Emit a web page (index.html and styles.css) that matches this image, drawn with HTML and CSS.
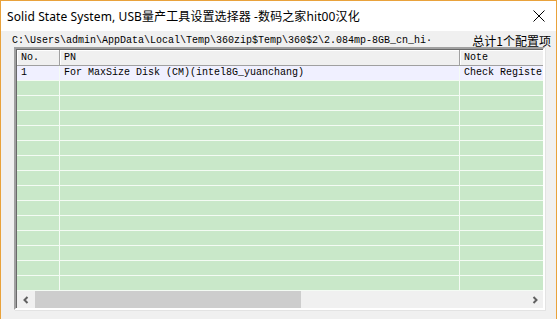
FILE: index.html
```html
<!DOCTYPE html>
<html lang="zh-CN">
<head>
  <meta charset="UTF-8" />
  <title>Solid State System, USB量产工具设置选择器</title>
  <link rel="stylesheet" href="styles.css">
</head>
<body>
  <div class="window">
    <div class="titlebar">
      <span class="title">Solid State System, USB量产工具设置选择器 -数码之家hit00汉化</span>
      <span class="close">
        <svg width="12" height="12" viewBox="0 0 12 12"><path d="M0.5 0.5 L11.5 11.5 M11.5 0.5 L0.5 11.5" stroke="#000" stroke-width="1" fill="none"/></svg>
      </span>
    </div>
    <div class="client">
      <div class="pathbar">
        <span class="path">C:\Users\admin\AppData\Local\Temp\360zip$Temp\360$2\2.084mp-8GB_cn_hi·</span>
        <span class="count">总计1个配置项</span>
      </div>
      <div class="listbox">
        <div class="grid">
          <div class="row head">
            <div class="cell c-no">No.</div>
            <div class="cell c-pn">PN</div>
            <div class="cell c-note">Note</div>
          </div>
          <div class="row selected">
            <div class="cell c-no">1</div>
            <div class="cell c-pn">For MaxSize Disk (CM)(intel8G_yuanchang)</div>
            <div class="cell c-note">Check Registe</div>
          </div>
          <div class="row"><div class="cell c-no"></div><div class="cell c-pn"></div><div class="cell c-note"></div></div>
          <div class="row"><div class="cell c-no"></div><div class="cell c-pn"></div><div class="cell c-note"></div></div>
          <div class="row"><div class="cell c-no"></div><div class="cell c-pn"></div><div class="cell c-note"></div></div>
          <div class="row"><div class="cell c-no"></div><div class="cell c-pn"></div><div class="cell c-note"></div></div>
          <div class="row"><div class="cell c-no"></div><div class="cell c-pn"></div><div class="cell c-note"></div></div>
          <div class="row"><div class="cell c-no"></div><div class="cell c-pn"></div><div class="cell c-note"></div></div>
          <div class="row"><div class="cell c-no"></div><div class="cell c-pn"></div><div class="cell c-note"></div></div>
          <div class="row"><div class="cell c-no"></div><div class="cell c-pn"></div><div class="cell c-note"></div></div>
          <div class="row"><div class="cell c-no"></div><div class="cell c-pn"></div><div class="cell c-note"></div></div>
          <div class="row"><div class="cell c-no"></div><div class="cell c-pn"></div><div class="cell c-note"></div></div>
          <div class="row"><div class="cell c-no"></div><div class="cell c-pn"></div><div class="cell c-note"></div></div>
          <div class="row"><div class="cell c-no"></div><div class="cell c-pn"></div><div class="cell c-note"></div></div>
          <div class="row"><div class="cell c-no"></div><div class="cell c-pn"></div><div class="cell c-note"></div></div>
          <div class="row"><div class="cell c-no"></div><div class="cell c-pn"></div><div class="cell c-note"></div></div>
        </div>
        <div class="hscroll">
          <span class="arrow">
            <svg width="8" height="8" viewBox="0 0 8 8"><path d="M5.5 1 L2.5 4 L5.5 7" stroke="#606060" stroke-width="2" fill="none"/></svg>
          </span>
          <span class="thumb"></span>
          <span class="track"></span>
          <span class="arrow">
            <svg width="8" height="8" viewBox="0 0 8 8"><path d="M2.5 1 L5.5 4 L2.5 7" stroke="#606060" stroke-width="2" fill="none"/></svg>
          </span>
        </div>
      </div>
    </div>
  </div>
</body>
</html>
```

FILE: styles.css
```css
* {
  margin: 0;
  padding: 0;
  box-sizing: border-box;
}

body {
  background: #fff;
  font-family: "Noto Sans", "Noto Sans CJK SC", sans-serif;
}

.window {
  width: 557px;
  height: 319px;
  border: 1px solid #e9a23b;
  border-bottom: none;
  display: flex;
  flex-direction: column;
}

.titlebar {
  height: 30px;
  background: #fff;
  display: flex;
  align-items: center;
  justify-content: space-between;
  padding: 0 11px 0 6px;
}

.title {
  font-size: 12px;
  color: #000;
  letter-spacing: 0.1px;
}

.close {
  display: flex;
  align-items: center;
}

.client {
  flex: 1;
  background: #f0f0f0;
  padding: 0 11px 0 13px;
  display: flex;
  flex-direction: column;
}

.pathbar {
  height: 16px;
  display: flex;
  align-items: center;
  justify-content: space-between;
}

.path {
  font-family: "Liberation Mono", monospace;
  font-size: 10px;
  color: #000;
  margin-left: -2px;
  margin-top: 2px;
}

.count {
  font-family: "Noto Sans CJK SC", sans-serif;
  font-size: 12px;
  color: #000;
  margin-right: -6px;
  margin-top: 2px;
}

.listbox {
  height: 263px;
  border: 2px solid;
  border-color: #a0a0a0 #fff #fff #a0a0a0;
  box-shadow: inset 1px 1px 0 #696969, 1px 1px 0 #e3e3e3;
  background: #fff;
  display: flex;
  flex-direction: column;
  padding: 1px 0 0 1px;
}

.grid {
  flex: 1;
  overflow: hidden;
  background: #c9e8c9;
}

.row {
  display: flex;
  height: 15px;
  border-bottom: 1px solid #f4fbf4;
}

.cell {
  font-family: "Liberation Mono", monospace;
  font-size: 10px;
  line-height: 14px;
  padding-left: 4px;
  white-space: nowrap;
  overflow: hidden;
  border-right: 1px solid #f4fbf4;
}

.c-no {
  width: 43px;
}

.c-pn {
  width: 400px;
}

.c-note {
  flex: 1;
  border-right: none;
}

.row.head {
  height: 16px;
  background: #f0f0f0;
  border-bottom: 1px solid #a0a0a0;
}

.row.head .cell {
  line-height: 15px;
  border-right: 1px solid #a0a0a0;
  box-shadow: inset 1px 1px 0 #fff;
}

.row.head .c-note {
  border-right: none;
}

.row.selected {
  background: #f0f0ff;
}

.hscroll {
  height: 17px;
  display: flex;
  background: #f0f0f0;
}

.arrow {
  width: 17px;
  display: flex;
  align-items: center;
  justify-content: center;
}

.thumb {
  width: 266px;
  background: #cdcdcd;
  margin: 0 1px;
}

.track {
  flex: 1;
}
```
